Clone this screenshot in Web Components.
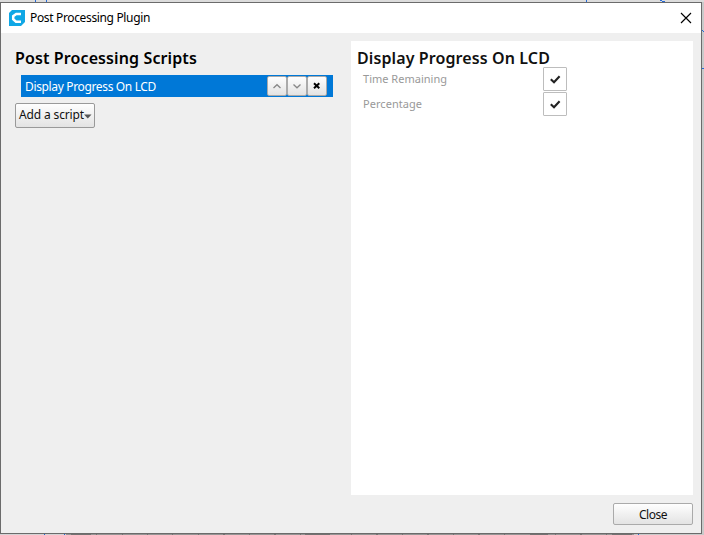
<!DOCTYPE html>
<html lang="en"><head><meta charset="utf-8"><title>Post Processing Plugin</title>
<style>html,body{margin:0;width:704px;height:535px;overflow:hidden}body{font-family:"Noto Sans",sans-serif}</style></head>
<body>
<plugin-desktop><plugin-window></plugin-window></plugin-desktop>
<script>
const define=(name,html,setup)=>customElements.define(name,class extends HTMLElement{
  connectedCallback(){
    if(this.shadowRoot)return;
    const t=document.createElement('template');t.innerHTML=html;
    this.attachShadow({mode:'open'}).append(t.content.cloneNode(true));
    if(setup)setup(this,this.shadowRoot);
  }
});

// A single line of text whose tracking is adjusted to a given width.
define('ui-label','<style>:host{display:block;white-space:nowrap}span{display:inline-block}</style><span><slot></slot></span>',(el,root)=>{
  const s=root.querySelector('span'),w=+el.getAttribute('width');
  el.style.width=w+'px';
  s.style.letterSpacing=(w-s.getBoundingClientRect().width)/el.textContent.length+'px';
});

define('ui-button',`<style>
:host{display:flex;box-sizing:border-box;align-items:center;justify-content:center;border:1px solid #aaa;border-radius:2px;background:linear-gradient(#fefefe,#e3e3e3);color:#111}
</style><slot></slot>`);

define('ui-check',`<style>
:host{display:flex;box-sizing:border-box;width:24px;height:24px;align-items:center;justify-content:center;border:1px solid #bdbdbd;border-radius:1px;background:#fff}
</style><svg width="22" height="22" viewBox="0 0 22 22"><path d="M6.8 11.3 10 14.3 15.6 8.2" fill="none" stroke="#222" stroke-width="2.1"/></svg>`);

define('title-bar',`<style>
:host{display:flex;height:30px;background:#fff;align-items:center;padding:0 9px 0 8px;box-sizing:border-box}
ui-label{font:12px/16px "Noto Sans",sans-serif;margin-left:5px;color:#000}
.x{margin-left:auto}
</style>
<svg width="16" height="16" viewBox="0 0 16 16"><path d="M3 0H16V12L12 16H0V3Z" fill="#10a7e5"/><path d="M12 4.1H7.2L4.2 6.2V9.3L7 11.8H12" fill="none" stroke="#fff" stroke-width="2.5"/></svg>
<ui-label width="120">Post Processing Plugin</ui-label>
<svg class="x" width="12" height="12" viewBox="0 0 12 12"><path d="M1 1 11 11M11 1 1 11" stroke="#000" stroke-width="1.15"/></svg>`);

define('script-row',`<style>
:host{display:flex;box-sizing:border-box;width:312px;height:22px;margin-left:6px;padding:0 6px 0 4px;align-items:center;background:#0078d7;color:#fff}
::slotted(ui-label){padding-top:1px}
.tools{display:flex;margin-left:auto}
ui-button{width:20px;height:20px}
</style>
<slot></slot>
<div class="tools">
<ui-button><svg width="18" height="18"><path d="M5.5 11 9 7.7 12.5 11" fill="none" stroke="#888" stroke-width="1.3"/></svg></ui-button>
<ui-button><svg width="18" height="18"><path d="M5.5 7.5 9 10.8 12.5 7.5" fill="none" stroke="#888" stroke-width="1.3"/></svg></ui-button>
<ui-button><svg width="18" height="18"><path d="M6 6.3 11.3 11.2M11.3 6.3 6 11.2" stroke="#000" stroke-width="2"/></svg></ui-button>
</div>`);

define('setting-row',`<style>
:host{display:flex;height:25px;align-items:center;padding-left:12px}
.name{width:180px}
</style><div class="name"><slot></slot></div><ui-check></ui-check>`);

define('plugin-window',`<style>
:host{display:flex;flex-direction:column;box-sizing:border-box;width:702px;height:532px;border:1px solid #6b6b6b;background:#efefef}
.body{display:flex;padding:8px 8px 0 14px;height:454px}
.left{width:336px;flex:none}
.right{flex:1;background:#fff}
h1{margin:0;font:600 16px/22px "Noto Sans",sans-serif;color:#000}
.left h1{padding-top:6px;margin-bottom:6px}
.right h1{padding:6px 0 0 6px;margin-bottom:-3px;color:#111}
.add{width:80px;height:25px;margin-top:6px;padding-left:3px;justify-content:flex-start;border-color:#999}
.add ui-label,.close ui-label,script-row ui-label{font:12px/16px "Noto Sans",sans-serif}
.add ui-label{padding-bottom:1px}
.close ui-label{padding-top:1px}
setting-row ui-label{font:11px/15px "Noto Sans",sans-serif;color:#999}
.foot{display:flex;justify-content:flex-end;padding:8px 8px 0}
.close{width:80px;height:22px}
</style>
<title-bar></title-bar>
<div class="body">
<div class="left"><h1><ui-label width="182">Post Processing Scripts</ui-label></h1>
<script-row><ui-label width="131">Display Progress On LCD</ui-label></script-row>
<ui-button class="add"><ui-label width="65">Add a script</ui-label><svg width="8" height="8"><path d="M0 2.5H7.5L3.8 6.5Z" fill="#555"/></svg></ui-button></div>
<div class="right"><h1><ui-label width="193">Display Progress On LCD</ui-label></h1>
<setting-row><ui-label width="84">Time Remaining</ui-label></setting-row>
<setting-row><ui-label width="59">Percentage</ui-label></setting-row></div>
</div>
<div class="foot"><ui-button class="close"><ui-label width="28">Close</ui-label></ui-button></div>`);

define('plugin-desktop',`<style>
:host{display:grid;position:relative;width:704px;height:535px;padding-top:2px;box-sizing:border-box;background:#c9caca;align-content:start}
svg{position:absolute;left:0;top:0}::slotted(*){z-index:1}
</style>
<svg width="704" height="535" shape-rendering="crispEdges">
<path d="M0 0H704V2H0Z" fill="#dcdcdc"/><path d="M66 534H634V535H66Z" fill="#979595"/><path d="M0 534H66V535H0Z" fill="#d5d3d5"/>
<path d="M35.5 0V2M46.5 0V2M586.5 0V2M660 0.5H662M662 1.5H665M702 30.5H703M703 31.5H704M702 68.5H704M44.5 534V535M64.5 534V535M638.5 534V535" stroke="#2469d8"/>
<path d="M71 534.5H91M96 534.5H97M122 534.5H123M147 534.5H148M172 534.5H173M198 534.5H199M223 534.5H225M249 534.5H250M274 534.5H276M300 534.5H301M305 534.5H330M351 534.5H352M376 534.5H378M402 534.5H403M427 534.5H429M453 534.5H454M478 534.5H480M504 534.5H505M530 534.5H548M555 534.5H556M580 534.5H582M606 534.5H607M612 534.5H632" stroke="#747272"/>
</svg><slot></slot>`);
</script>
</body></html>
